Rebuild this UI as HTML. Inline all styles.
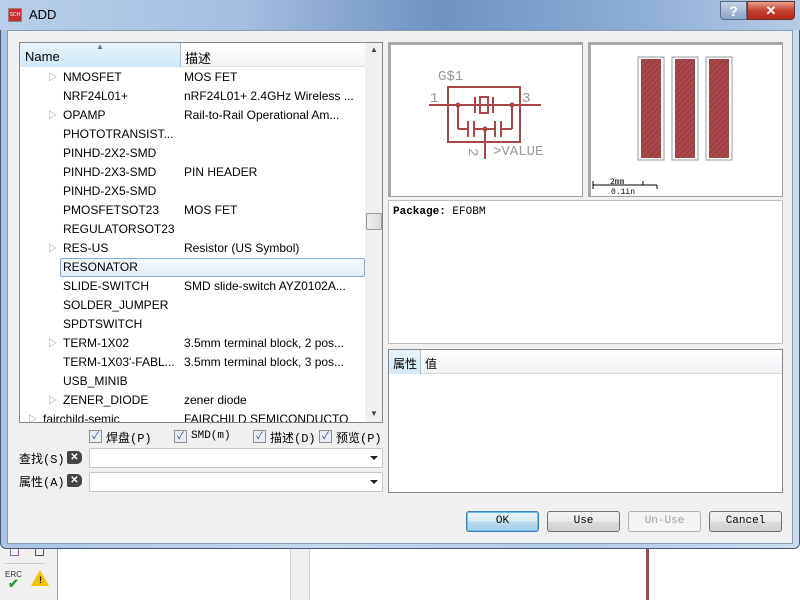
<!DOCTYPE html>
<html><head><meta charset="utf-8"><style>
*{margin:0;padding:0;box-sizing:border-box}
body{width:800px;height:600px;overflow:hidden;position:relative;background:#fff;font-family:"Liberation Sans","Noto Sans CJK SC",sans-serif;font-size:12px;color:#000}
.abs{position:absolute}
.win{left:0;top:0;width:800px;height:549px;background:linear-gradient(90deg,#a9c4e4,#c4d8ee 40%,#b0cae8 70%,#c9dcf0);border:1px solid #4a5a70;border-top:none;border-radius:0 0 6px 6px}
.title{left:0;top:0;width:800px;height:30px;background:linear-gradient(90deg,#b9cfe9 0%,#a5bfdf 30%,#6f92c0 55%,#8eaed4 80%,#b6cce6 100%)}
.client{left:7px;top:30px;width:786px;height:514px;background:#f0f0f0;border:1px solid #8a9bb0}
.list{left:19px;top:42px;width:364px;height:381px;background:#fff;border:1px solid #828790;overflow:hidden}
.row{position:absolute;left:0;width:345px;height:19px;line-height:19px;font-size:12px;white-space:nowrap}
.n{position:absolute;left:43px;top:0}
.d{position:absolute;left:164px;top:0}
.tri{position:absolute;left:28px;top:0;color:#888;font-size:9px}
.panel{background:#fff;border:1px solid #a0a0a0;border-top:3px solid #a8a8a8;border-left:3px solid #a8a8a8}
.btn{top:511px;width:73px;height:21px;border:1px solid #707070;border-radius:3px;background:linear-gradient(#f2f2f2,#ebebeb 50%,#dddddd 50%,#cfcfcf);font-family:"Liberation Mono",monospace;font-size:11px;text-align:center;line-height:19px}
.cb{width:13px;height:13px;border:1px solid #8e8f8f;background:#e8eef6;font-size:10px;line-height:11px;text-align:center;color:#2a4a8a}
.combo{left:89px;width:294px;height:20px;background:#fff;border:1px solid #c8c8c8}
.combo:after{content:"";position:absolute;right:4px;top:7px;border:4px solid transparent;border-top:4px solid #222}
.lbl{font-size:12px;font-family:"Liberation Mono","Noto Sans CJK SC",monospace}
.xb{width:15px;height:13px;background:#444;color:#fff;font-size:10px;font-weight:bold;text-align:center;line-height:13px;border-radius:2px 5px 5px 2px}
</style></head><body>
<div class="abs" style="left:0;top:549px;width:58px;height:51px;background:#f0f0f0;border-right:1px solid #a0a0a0"></div>
<div class="abs" style="left:290px;top:549px;width:20px;height:51px;background:#f0f0f0;border-left:1px solid #ccc;border-right:1px solid #ccc"></div>
<div class="abs" style="left:646px;top:549px;width:3px;height:51px;background:#a84848"></div>
<div class="abs" style="left:5px;top:563px;width:40px;height:1px;background:#ccc"></div>
<div class="abs" style="left:5px;top:570px;font-size:8px;color:#333">ERC</div>
<div class="abs" style="left:8px;top:576px;color:#2a9a2a;font-size:13px;font-weight:bold">✔</div>
<div class="abs" style="left:31px;top:570px;width:0;height:0;border-left:9px solid transparent;border-right:9px solid transparent;border-bottom:16px solid #f4c400"></div>
<div class="abs" style="left:39px;top:575px;font-size:9px;font-weight:bold">!</div>
<div class="abs" style="left:10px;top:549px;width:9px;height:7px;border:1px solid #9a5aa8;border-top:none"></div>
<div class="abs" style="left:35px;top:549px;width:9px;height:7px;border:1px solid #555;border-top:none"></div>

<div class="abs win"></div>
<div class="abs title"></div>
<div class="abs" style="left:8px;top:8px;width:14px;height:14px;background:#c83030;border:1px solid #888;color:#fff;font-size:5px;line-height:12px;text-align:center">SCH</div>
<div class="abs" style="left:29px;top:7px;font-size:13px">ADD</div>
<div class="abs" style="left:720px;top:1px;width:27px;height:19px;border:1px solid #5a6a80;border-radius:0 0 0 4px;background:linear-gradient(#c4d4e8,#8aa4c4);color:#fff;font-weight:bold;text-align:center;font-size:14px;line-height:18px">?</div>
<div class="abs" style="left:747px;top:1px;width:48px;height:19px;border:1px solid #6a3030;border-radius:0 0 4px 0;background:linear-gradient(#e8a090,#c84030 50%,#b02818);color:#fff;font-weight:bold;text-align:center;font-size:13px;line-height:18px">✕</div>

<div class="abs client"></div>

<div class="abs list">
 <div class="abs" style="left:0;top:0;width:345px;height:24px;border-bottom:1px solid #e0e0e0;background:linear-gradient(#fff,#f2f4f6)"></div>
 <div class="abs" style="left:0;top:0;width:161px;height:24px;background:linear-gradient(#e8f4fc,#cfe8f8);border-right:1px solid #94c4e8"></div>
 <div class="abs" style="left:76px;top:-1px;font-size:8px;color:#5a7a9a">▲</div>
 <div class="abs" style="left:5px;top:6px;font-size:13px">Name</div>
 <div class="abs" style="left:165px;top:5px;font-size:13px">描述</div>
 <div class="abs" style="left:345px;top:0;width:18px;height:379px;background:#f0f0f0"></div>
 <div class="abs" style="left:350px;top:2px;font-size:8px;color:#444">▲</div>
 <div class="abs" style="left:350px;top:366px;font-size:8px;color:#444">▼</div>
 <div class="abs" style="left:346px;top:170px;width:16px;height:17px;border:1px solid #999;border-radius:2px;background:linear-gradient(90deg,#eee,#ddd)"></div>
 <div class="abs" style="left:40px;top:215px;width:305px;height:19px;border:1px solid #84acdd;border-radius:2px;background:linear-gradient(#f4f9fe,#e4effc)"></div>
 <div class="row" style="top:25px"><span class="tri">▷</span><span class="n">NMOSFET</span><span class="d">MOS FET</span></div>
 <div class="row" style="top:44px"><span class="n">NRF24L01+</span><span class="d">nRF24L01+ 2.4GHz Wireless ...</span></div>
 <div class="row" style="top:63px"><span class="tri">▷</span><span class="n">OPAMP</span><span class="d">Rail-to-Rail Operational Am...</span></div>
 <div class="row" style="top:82px"><span class="n">PHOTOTRANSIST...</span></div>
 <div class="row" style="top:101px"><span class="n">PINHD-2X2-SMD</span></div>
 <div class="row" style="top:120px"><span class="n">PINHD-2X3-SMD</span><span class="d">PIN HEADER</span></div>
 <div class="row" style="top:139px"><span class="n">PINHD-2X5-SMD</span></div>
 <div class="row" style="top:158px"><span class="n">PMOSFETSOT23</span><span class="d">MOS FET</span></div>
 <div class="row" style="top:177px"><span class="n">REGULATORSOT23</span></div>
 <div class="row" style="top:196px"><span class="tri">▷</span><span class="n">RES-US</span><span class="d">Resistor (US Symbol)</span></div>
 <div class="row" style="top:215px"><span class="n">RESONATOR</span></div>
 <div class="row" style="top:234px"><span class="n">SLIDE-SWITCH</span><span class="d">SMD slide-switch AYZ0102A...</span></div>
 <div class="row" style="top:253px"><span class="n">SOLDER_JUMPER</span></div>
 <div class="row" style="top:272px"><span class="n">SPDTSWITCH</span></div>
 <div class="row" style="top:291px"><span class="tri">▷</span><span class="n">TERM-1X02</span><span class="d">3.5mm terminal block, 2 pos...</span></div>
 <div class="row" style="top:310px"><span class="n">TERM-1X03'-FABL...</span><span class="d">3.5mm terminal block, 3 pos...</span></div>
 <div class="row" style="top:329px"><span class="n">USB_MINIB</span></div>
 <div class="row" style="top:348px"><span class="tri">▷</span><span class="n">ZENER_DIODE</span><span class="d">zener diode</span></div>
 <div class="row" style="top:367px"><span class="tri" style="left:8px">▷</span><span class="n" style="left:23px">fairchild-semic</span><span class="d">FAIRCHILD SEMICONDUCTO</span></div>
</div>

<div class="abs cb" style="left:89px;top:430px">✓</div><div class="abs lbl" style="left:106px;top:429px">焊盘(P)</div>
<div class="abs cb" style="left:174px;top:430px">✓</div><div class="abs lbl" style="left:191px;top:430px;font-size:11px">SMD(m)</div>
<div class="abs cb" style="left:253px;top:430px">✓</div><div class="abs lbl" style="left:270px;top:429px">描述(D)</div>
<div class="abs cb" style="left:319px;top:430px">✓</div><div class="abs lbl" style="left:336px;top:429px">预览(P)</div>

<div class="abs lbl" style="left:19px;top:450px">查找(S)</div>
<div class="abs xb" style="left:67px;top:451px">✕</div>
<div class="abs combo" style="top:448px"></div>
<div class="abs lbl" style="left:19px;top:473px">属性(A)</div>
<div class="abs xb" style="left:67px;top:474px">✕</div>
<div class="abs combo" style="top:472px"></div>

<div class="abs panel" style="left:388px;top:42px;width:195px;height:155px">
<svg width="192" height="152" viewBox="0 0 192 152" style="position:absolute;left:0;top:0">
<g transform="translate(-8,28)">
<g stroke="#a84848" stroke-width="2" fill="none">
<rect x="65" y="14" width="72" height="55"/>
<line x1="46" y1="32" x2="158" y2="32"/>
<line x1="92" y1="24" x2="92" y2="40"/><line x1="110" y1="24" x2="110" y2="40"/>
<rect x="97" y="24" width="8" height="16"/>
<line x1="75" y1="32" x2="75" y2="56"/><line x1="129" y1="32" x2="129" y2="56"/>
<line x1="75" y1="56" x2="85" y2="56"/><line x1="91" y1="56" x2="112" y2="56"/><line x1="118" y1="56" x2="129" y2="56"/>
<line x1="85" y1="48" x2="85" y2="64"/><line x1="91" y1="48" x2="91" y2="64"/>
<line x1="112" y1="48" x2="112" y2="64"/><line x1="118" y1="48" x2="118" y2="64"/>
<line x1="102" y1="56" x2="102" y2="86"/>
</g>
<g fill="#a84848"><circle cx="75" cy="32" r="2.5"/><circle cx="129" cy="32" r="2.5"/><circle cx="102" cy="56" r="2.5"/></g>
<g fill="#999" font-family="Liberation Mono,monospace" font-size="14">
<text x="55" y="7">G$1</text><text x="47" y="29">1</text><text x="139" y="29">3</text><text x="110" y="82">&gt;VALUE</text>
<text x="0" y="0" transform="translate(86,75) rotate(90)">2</text>
</g>
</g>
</svg>
</div>
<div class="abs panel" style="left:588px;top:42px;width:195px;height:155px">
<svg width="192" height="152" viewBox="0 0 192 152" style="position:absolute;left:0;top:0">
<defs><pattern id="h" width="4" height="4" patternUnits="userSpaceOnUse" patternTransform="rotate(45)"><rect width="4" height="4" fill="#a84848"/><line x1="0" y1="0" x2="0" y2="4" stroke="#7a3030" stroke-width="1"/></pattern></defs>
<g stroke="#999" fill="none">
<rect x="47" y="12" width="26" height="103"/><rect x="81" y="12" width="26" height="103"/><rect x="115" y="12" width="26" height="103"/>
</g>
<rect x="50" y="14" width="20" height="99" fill="url(#h)"/><rect x="84" y="14" width="20" height="99" fill="url(#h)"/><rect x="118" y="14" width="20" height="99" fill="url(#h)"/>
<g stroke="#000"><line x1="2" y1="140" x2="66" y2="140"/><line x1="2" y1="136" x2="2" y2="144"/><line x1="52" y1="136" x2="52" y2="140"/><line x1="66" y1="140" x2="66" y2="144"/></g>
<text x="19" y="139" font-size="8" font-family="Liberation Mono,monospace">2mm</text>
<text x="20" y="149" font-size="8" font-family="Liberation Mono,monospace">0.1in</text>
</svg>
</div>
<div class="abs" style="left:388px;top:200px;width:395px;height:144px;background:#fff;border:1px solid #c0c0c0"><div style="position:absolute;left:4px;top:5px;font-family:'Liberation Mono',monospace;font-size:11px"><b>Package:</b> EFOBM</div></div>
<div class="abs" style="left:388px;top:349px;width:395px;height:144px;background:#fff;border:1px solid #828790">
 <div class="abs" style="left:0;top:0;width:393px;height:24px;background:linear-gradient(#fff,#f0f2f4);border-bottom:1px solid #d8d8d8"></div>
 <div class="abs" style="left:0;top:0;width:32px;height:24px;background:linear-gradient(#e8f4fc,#d4eafa);border-right:1px solid #94c4e8"></div>
 <div class="abs" style="left:4px;top:5px;font-size:12px">属性</div>
 <div class="abs" style="left:36px;top:5px;font-size:12px">值</div>
</div>
<div class="abs btn" style="left:466px;border-color:#3c7fb1;background:linear-gradient(#e8f4fb,#d8ecf8 50%,#bedcf0 50%,#a8cce6);box-shadow:inset 0 0 0 1px #6cc0f0">OK</div>
<div class="abs btn" style="left:547px">Use</div>
<div class="abs btn" style="left:628px;border-color:#b0b0b0;background:#f4f4f4;color:#a0a0a0">Un-Use</div>
<div class="abs btn" style="left:709px">Cancel</div>
</body></html>
